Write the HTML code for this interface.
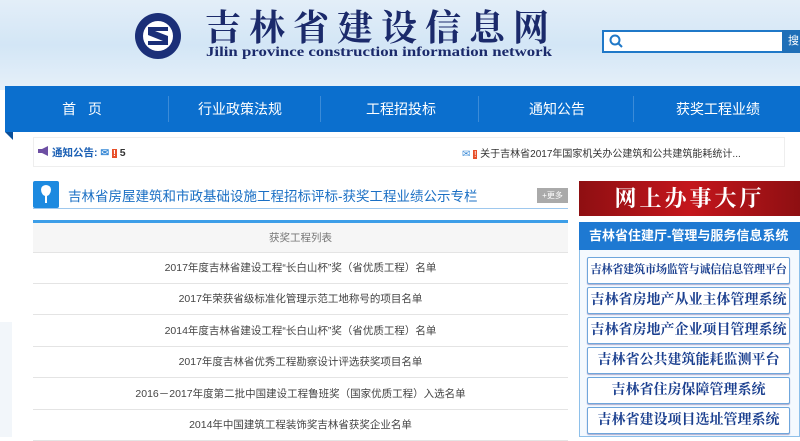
<!DOCTYPE html>
<html><head><meta charset="utf-8"><style>
*{margin:0;padding:0;box-sizing:border-box}
body{width:800px;height:437px;overflow:hidden;position:relative;background:#fff;font-family:"Liberation Sans","Noto Sans CJK SC",sans-serif}
.abs{position:absolute}
.sky{left:0;top:0;width:800px;height:90px;background:linear-gradient(180deg,#e3eef8 0%,#d3e6f6 50%,#e6f0f9 100%)}
.nav{left:5px;top:86px;width:795px;height:46px;background:#0b6fce}
.nav span{position:absolute;top:13px;color:#fff;font-size:14px;transform:translateX(-50%);white-space:nowrap}
.sep{position:absolute;top:10px;width:1px;height:26px;background:#3b8bd8}
.serif{font-family:"Liberation Serif","Noto Serif CJK SC",serif;font-weight:bold}
.row{position:absolute;left:33px;width:535px;height:31px;border-bottom:1px solid #e4e4e4;text-align:center;font-size:10.5px;color:#444;line-height:31px}
.btn{position:absolute;left:587px;width:203px;height:27px;border:1px solid #6fa6dc;border-radius:2px;text-align:center;color:#1a3f8f;font-size:14px;line-height:25px;background:#fff;box-shadow:0 1px 1px #aac;white-space:nowrap;overflow:hidden}
</style></head><body>
<div class="abs sky"></div>
<svg class="abs" style="left:134px;top:12px" width="48" height="48" viewBox="0 0 48 48"><circle cx="24" cy="24" r="23" fill="#1b2f78"/><circle cx="24" cy="24" r="15" fill="#fff"/><path d="M14 15h20v4H21l13 5v9H14v-4h15l-15-6z" fill="#1b2f78"/></svg>
<div class="abs serif" style="left:205px;top:8px;font-size:36px;color:#1b2a6b;letter-spacing:8px;line-height:40px;white-space:nowrap">吉林省建设信息网</div>
<div class="abs serif" style="left:206px;top:45px;font-size:14px;color:#1b2a6b;line-height:16px;white-space:nowrap;transform:scaleX(1.2);transform-origin:left">Jilin province construction information network</div>
<div class="abs" style="left:602px;top:30px;width:182px;height:23px;border:2px solid #1f78c8;background:#fff"></div>
<svg class="abs" style="left:609px;top:34px" width="14" height="15"><circle cx="6" cy="6" r="4.5" stroke="#1f78c8" stroke-width="2" fill="none"/><path d="M9 9l4 4" stroke="#1f78c8" stroke-width="2"/></svg>
<div class="abs" style="left:782px;top:30px;width:18px;height:23px;background:#1f6fb8;color:#fff;font-size:11px;line-height:23px;padding-left:6px;overflow:hidden;white-space:nowrap">搜</div>
<div class="abs nav">
<span style="left:77px">首&nbsp;&nbsp;&nbsp;页</span><div class="sep" style="left:163px"></div>
<span style="left:235px">行业政策法规</span><div class="sep" style="left:315px"></div>
<span style="left:396px">工程招投标</span><div class="sep" style="left:473px"></div>
<span style="left:552px">通知公告</span><div class="sep" style="left:628px"></div>
<span style="left:713px">获奖工程业绩</span></div>
<div class="abs" style="left:5px;top:132px;width:0;height:0;border-top:8px solid #0a4f99;border-left:8px solid transparent"></div>
<div class="abs" style="left:33px;top:137px;width:752px;height:30px;border:1px solid #eee;background:#fff"></div>
<div class="abs" style="left:38px;top:146px;width:10px;height:10px;background:#6d4fa3;clip-path:polygon(0 30%,40% 30%,100% 0,100% 100%,40% 70%,0 70%)"></div>
<div class="abs" style="left:52px;top:145px;font-size:10.5px;color:#1a5fb4;font-weight:bold">通知公告: <span style="color:#3a8ad6">✉</span> <span style="background:#e8502a;color:#fff;font-size:8px;padding:0 1px">!</span> <span style="color:#333">5</span></div>
<div class="abs" style="left:462px;top:145px;font-size:10px;color:#333"><span style="color:#3a8ad6">✉</span> <span style="background:#e8502a;color:#fff;font-size:8px;padding:0 1px">!</span> 关于吉林省2017年国家机关办公建筑和公共建筑能耗统计...</div>
<div class="abs" style="left:33px;top:181px;width:26px;height:27px;background:#1d8ae0;border-radius:2px"></div>
<div class="abs" style="left:41px;top:185px;width:10px;height:11px;background:#fff;border-radius:50% 50% 50% 50%/40% 40% 60% 60%"></div>
<div class="abs" style="left:45px;top:195px;width:2px;height:8px;background:#fff"></div>
<div class="abs" style="left:68px;top:185px;font-size:13.5px;color:#1a6fc4;white-space:nowrap">吉林省房屋建筑和市政基础设施工程招标评标-获奖工程业绩公示专栏</div>
<div class="abs" style="left:537px;top:188px;width:31px;height:15px;background:#aaa;color:#fff;font-size:8px;line-height:15px;text-align:center">+更多</div>
<div class="abs" style="left:33px;top:208px;width:535px;height:1px;background:#9ec8ee"></div>
<div class="abs" style="left:33px;top:220px;width:535px;height:3px;background:#3d9ee8"></div>
<div class="row" style="top:223px;height:30px;background:#f6f6f6;color:#777">获奖工程列表</div>
<div class="row" style="top:253px">2017年度吉林省建设工程“长白山杯”奖（省优质工程）名单</div>
<div class="row" style="top:284px">2017年荣获省级标准化管理示范工地称号的项目名单</div>
<div class="row" style="top:316px">2014年度吉林省建设工程“长白山杯”奖（省优质工程）名单</div>
<div class="row" style="top:347px">2017年度吉林省优秀工程勘察设计评选获奖项目名单</div>
<div class="row" style="top:379px">2016－2017年度第二批中国建设工程鲁班奖（国家优质工程）入选名单</div>
<div class="row" style="top:410px">2014年中国建筑工程装饰奖吉林省获奖企业名单</div>
<div class="abs" style="left:0;top:322px;width:12px;height:115px;background:#f2f6fa"></div>
<div class="abs serif" style="left:579px;top:181px;width:221px;height:35px;background:linear-gradient(90deg,#8e0f12,#c4161c,#8e0f12);color:#fff;font-size:22px;line-height:35px;text-align:center;letter-spacing:3px">网上办事大厅</div>
<div class="abs" style="left:579px;top:222px;width:221px;height:215px;border:1px solid #8ec0ea;border-top:none;background:#f4f9fe"></div>
<div class="abs" style="left:579px;top:222px;width:221px;height:28px;background:#1e79d2;color:#fff;font-size:13px;line-height:28px;padding-left:10px;font-weight:bold;white-space:nowrap">吉林省住建厅-管理与服务信息系统</div>
<div class="btn serif" style="top:257px;font-size:11.2px;letter-spacing:-0.3px">吉林省建筑市场监管与诚信信息管理平台</div>
<div class="btn serif" style="top:287px">吉林省房地产从业主体管理系统</div>
<div class="btn serif" style="top:317px">吉林省房地产企业项目管理系统</div>
<div class="btn serif" style="top:347px">吉林省公共建筑能耗监测平台</div>
<div class="btn serif" style="top:377px">吉林省住房保障管理系统</div>
<div class="btn serif" style="top:407px">吉林省建设项目选址管理系统</div>
</body></html>
